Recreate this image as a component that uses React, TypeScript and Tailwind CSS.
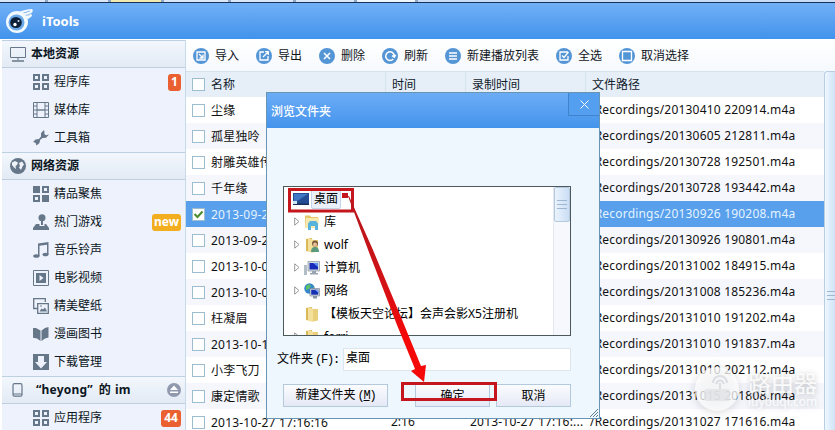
import type { ReactNode } from 'react'
import clsx from 'clsx'

const ui = "font-['Noto_Sans','Noto_Sans_CJK_SC',sans-serif]"

type IconName = 'apps' | 'film' | 'wrench' | 'featured' | 'joystick' | 'music' | 'video' | 'picture' | 'book' | 'download'

const icons: Record<IconName, ReactNode> = {
  apps: (
    <g fill="none" stroke="currentColor" strokeWidth="2">
      <rect x="1" y="1" width="5" height="5" />
      <rect x="10" y="1" width="5" height="5" />
      <rect x="1" y="10" width="5" height="5" />
      <rect x="10" y="10" width="5" height="5" />
    </g>
  ),
  film: (
    <g fill="none" stroke="currentColor">
      <path d="M.5.5h15v15H.5zM4 0v16M12 0v16" />
      <path strokeWidth="1.4" d="M4 8h8" />
      <path d="M0 4h4M0 8h4M0 12h4M12 4h4M12 8h4M12 12h4" />
    </g>
  ),
  wrench: (
    <path
      fill="currentColor"
      d="M11 0 8 3v3.500L6 9 2.500 9.500 0 12l2.500.8 1 2.700L6.500 13l.5-3L9.500 8l3.500-.2L16 4.500l-3 .7L11.300 4 11.500 2z"
    />
  ),
  featured: (
    <g fill="currentColor">
      <path d="M0 0h7v7H0zM9 9h7v7H9z" />
      <g fill="none" stroke="currentColor" strokeWidth="2">
        <rect x="10" y="1" width="5" height="5" />
        <rect x="1" y="10" width="5" height="5" />
      </g>
    </g>
  ),
  joystick: (
    <g fill="currentColor">
      <circle cx="9" cy="3.700" r="3.500" />
      <path d="M8 6h2v5H8z" />
      <path d="M3 10h3.500v2h5v-2H13l3 4v2H0v-2z" />
    </g>
  ),
  music: (
    <g fill="currentColor">
      <path d="M5 1.500 15.500 0v12.500H14V2.700l-7.500 1V14H5z" />
      <ellipse cx="3.400" cy="14" rx="3.200" ry="1.800" />
      <ellipse cx="12.500" cy="12.500" rx="3" ry="1.800" />
    </g>
  ),
  video: (
    <g>
      <path fill="none" stroke="currentColor" d="M.5.5h15v15H.5z" />
      <path fill="currentColor" fillRule="evenodd" d="M3 3h10v10H3zM6.500 5v6l4-3z" />
    </g>
  ),
  picture: (
    <g fill="none" stroke="currentColor" strokeWidth="1.300">
      <path d="M4 10.500H.7V.7h11.600V4" />
      <path d="M4.700 5.700h10.600v9.600H4.700z" />
      <path fill="currentColor" stroke="none" d="m6.500 13.500 2-3 1.500 1 2-2 2 4z" />
      <circle cx="8" cy="8" r=".8" fill="currentColor" stroke="none" />
    </g>
  ),
  book: <path fill="currentColor" d="M0 2l3 0 4.500 2.500V15L4 12.500l-4-.7zM15.500 1 12 2 8.500 4.500V15l3.500-2.500 3.500-1z" />,
  download: <path fill="currentColor" fillRule="evenodd" d="M0 0h16v16H0zM5 2v6H2l6 6.500L14 8h-3V2z" />,
}

const Icon = ({ name }: { name: IconName }) => (
  <svg className="w-4 h-4 shrink-0 text-[#667789]" viewBox="0 0 16 16">
    {icons[name]}
  </svg>
)

type Item = { label: string; icon: IconName; badge?: string }

const localItems: Item[] = [
  { label: '程序库', icon: 'apps', badge: '1' },
  { label: '媒体库', icon: 'film' },
  { label: '工具箱', icon: 'wrench' },
]

const networkItems: Item[] = [
  { label: '精品聚焦', icon: 'featured' },
  { label: '热门游戏', icon: 'joystick', badge: 'new' },
  { label: '音乐铃声', icon: 'music' },
  { label: '电影视频', icon: 'video' },
  { label: '精美壁纸', icon: 'picture' },
  { label: '漫画图书', icon: 'book' },
  { label: '下载管理', icon: 'download' },
]

const deviceItems: Item[] = [{ label: '应用程序', icon: 'apps', badge: '44' }]

const rows = [
  { name: '尘缘', path: '20130410 220914' },
  { name: '孤星独呤', path: '20130605 212811' },
  { name: '射雕英雄传', path: '20130728 192501' },
  { name: '千年缘', path: '20130728 193442' },
  { name: '2013-09-26', path: '20130926 190208', selected: true },
  { name: '2013-09-26', path: '20130926 190801' },
  { name: '2013-10-02', path: '20131002 184915' },
  { name: '2013-10-08', path: '20131008 185236' },
  { name: '枉凝眉', path: '20131010 191202' },
  { name: '2013-10-10', path: '20131010 191837' },
  { name: '小李飞刀', path: '20131010 202112' },
  { name: '康定情歌', path: '20131015 201808' },
  { name: '2013-10-27 17:16:16', path: '20131027 171616', time: '2:16', recorded: '2013-10-27 17:16:...' },
]

const tools: { label: string; draw: ReactNode }[] = [
  { label: '导入', draw: <path d="M4 7V4h8v8H4V7M6 6l4 4M10 6.500V10H6.500" /> },
  { label: '导出', draw: <path d="M8 4H4v8h8V8M7 9l5-5M9 3.700h3.300V7" /> },
  { label: '删除', draw: <path strokeWidth="1.600" d="m5 5 6 6M11 5l-6 6" /> },
  { label: '刷新', draw: <path strokeWidth="1.500" d="M11.200 11A4.300 4.300 0 1 1 12.300 8M10 7.700l2.300 1.500 1.300-2.400" /> },
  { label: '新建播放列表', draw: <path strokeWidth="1.500" d="M4 5h8M4 8h8M4 11h8" /> },
  { label: '全选', draw: <path d="M12 8v4H4V4h8M6 7.500l2 2L12.500 4" /> },
  { label: '取消选择', draw: <path d="M3.500 3.500h9v9h-9z" /> },
]

function SideItem({ label, icon, badge }: Item) {
  return (
    <div className="h-7 shrink-0 flex items-center pl-[31px] pr-[4px]">
      <Icon name={icon} />
      <span className="ml-[5px]">{label}</span>
      {badge && (
        <span
          className={clsx(
            'ml-auto h-[17px] rounded-[3px] text-white font-bold leading-[16px] text-center',
            badge === 'new' && 'w-[29px] bg-[#f3ae20]',
            badge === '1' && 'w-[13px] bg-[#ea6030]',
            badge === '44' && 'w-[20px] bg-[#ea6030]',
          )}
        >
          {badge}
        </span>
      )}
    </div>
  )
}

function SideHeader({ children }: { children: ReactNode }) {
  return (
    <div className="h-7 shrink-0 flex items-center border-y border-[#bcd0e2] bg-gradient-to-b from-[#f3f7fd] to-[#e3eaf5] pl-2 pr-[4px] font-bold">
      {children}
    </div>
  )
}

function Sidebar() {
  return (
    <div className="w-[184px] shrink-0 flex flex-col border-r border-[#c5dbe9] bg-[#eef2fd] text-[#0b1622]">
      <SideHeader>
        <svg className="w-4 h-4" viewBox="0 0 16 16" fill="none" stroke="#667789">
          <path d="M.5 1.500h15v10H.5zM8 12v2" />
          <path strokeWidth="1.500" d="M2 15h12" />
        </svg>
        <span className="ml-[5px]">本地资源</span>
      </SideHeader>
      {localItems.map((item) => (
        <SideItem key={item.label} {...item} />
      ))}
      <SideHeader>
        <svg className="w-4 h-4" viewBox="0 0 16 16">
          <circle cx="8" cy="8" r="8" fill="#667789" />
          <path fill="#eef3fa" d="M2 4.500 5 3l3 1.500L7 7 5.500 8 6 11 4 9.500 2 7zM9 5l3-1.500 2 3-1.500 2L11 12 9 9.500 10 8z" />
        </svg>
        <span className="ml-[5px]">网络资源</span>
      </SideHeader>
      {networkItems.map((item) => (
        <SideItem key={item.label} {...item} />
      ))}
      <SideHeader>
        <svg className="ml-[2px] w-[11px] h-[14px]" viewBox="0 0 11 14" fill="none" stroke="#667789">
          <rect x="1" y=".7" width="9" height="12.500" rx="1.500" strokeWidth="1.200" />
          <path d="M1 11h9" />
        </svg>
        <span className="ml-[13px] flex tracking-[0.2px]">
          “heyong”<span className="ml-[6px] mr-[4px]">的</span>im
        </span>
        <svg className="ml-auto w-[14px] h-[14px]" viewBox="0 0 14 14">
          <circle cx="7" cy="7" r="7" fill="#9099ad" />
          <path fill="#fff" d="m7 2.500 4 4.500H3zM3 8.500h8V10H3z" />
        </svg>
      </SideHeader>
      {deviceItems.map((item) => (
        <SideItem key={item.label} {...item} />
      ))}
    </div>
  )
}

function Checkbox({ checked }: { checked?: boolean }) {
  return (
    <span className="w-[13px] h-[13px] shrink-0 border border-[#9cbccf] bg-white">
      {checked && (
        <svg className="w-[11px] h-[11px]" viewBox="0 0 11 11" fill="none" stroke="#4a8b2c" strokeWidth="2">
          <path d="m1.500 5 3 3L9.500 2.500" />
        </svg>
      )}
    </span>
  )
}

function Table() {
  return (
    <div className="w-[638px] shrink-0 whitespace-nowrap">
      <div className="h-[26px] grid grid-cols-[200px_80px_120px_1fr] bg-[#e6eff7] border-t border-[#d5e2ec] text-[#10202c] leading-[25px]">
        <div className="flex items-center pl-[6px] gap-[6px] border-r border-[#d6e4ee]">
          <Checkbox />
          名称
        </div>
        <div className="pl-[6px] border-r border-[#d6e4ee]">时间</div>
        <div className="pl-[6px] border-r border-[#d6e4ee]">录制时间</div>
        <div className="pl-[6px]">文件路径</div>
      </div>
      {rows.map((row, i) => (
        <div
          key={row.path}
          className={clsx(
            'h-[26px] grid grid-cols-[199px_80px_119px_1fr] leading-[25px]',
            row.selected ? 'bg-[#589fec] text-[#e4f3ff]' : i % 2 ? 'bg-[#f5f7fd] text-[#111]' : 'bg-white text-[#111]',
          )}
        >
          <div className="flex items-center pl-[6px] gap-[6px] tracking-[0.2px]">
            <Checkbox checked={row.selected} />
            {row.name}
          </div>
          <div className="pl-[6px]">{row.time}</div>
          <div className="pl-[5px] tracking-[0.2px]">{row.recorded}</div>
          <div className="pl-[6px] tracking-[0.2px]">/Recordings/{row.path}.m4a</div>
        </div>
      ))}
    </div>
  )
}

const Twisty = ({ show }: { show?: boolean }) => (
  <svg className="w-[6px] h-[9px] shrink-0" viewBox="0 0 6 9">
    {show && <path d="M.7.8v7.400L5 4.500z" fill="#fff" stroke="#909090" strokeWidth=".9" />}
  </svg>
)

const folder = (
  <g>
    <path fill="#d9b958" d="m2 2 6-1v14l-6-1z" />
    <path fill="#f4e09a" d="m4 1.500 5 1V16l-5-1.500z" />
    <path fill="#e9cf7b" d="M9 3h5v11.500L9 15.500z" />
  </g>
)

const tree: { label: string; open?: boolean; draw: ReactNode }[] = [
  {
    label: '库',
    open: true,
    draw: (
      <g>
        <path fill="#e3c66c" d="M1 3V1.500h5L7 3h7v10H1z" />
        <path fill="#f7e9b0" d="M2 4h13l-1 10H1z" />
        <path fill="#58b4dc" d="M4 9.500 6 7h6l2 2.500V16h-3v-4H7v4H4z" />
      </g>
    ),
  },
  {
    label: 'wolf',
    open: true,
    draw: (
      <g>
        {folder}
        <circle cx="11" cy="6.500" r="3" fill="#7a5a3a" />
        <circle cx="11" cy="7.500" r="2" fill="#e8c19c" />
        <path fill="#5c9a80" d="M7 15c0-4 2-5 4-5s4 1 4 5z" />
      </g>
    ),
  },
  {
    label: '计算机',
    open: true,
    draw: (
      <g>
        <path fill="#b3bdc6" d="M0 5h3v10H0z" />
        <path fill="#d5dbe2" stroke="#8792a0" strokeWidth=".7" d="M4 1.500h11.500v9.500H4z" />
        <path fill="#172bb8" d="M5.500 3H14v6.500H5.500z" />
        <path fill="#5c8df0" d="M9 3h5v4z" />
        <path fill="#9ba5b1" d="M8 11h4v2h2v1.500H6V13h2z" />
      </g>
    ),
  },
  {
    label: '网络',
    open: true,
    draw: (
      <g>
        <circle cx="5.500" cy="5.500" r="5.200" fill="#3687c9" />
        <path fill="#5cbf68" d="M2 3 5 1l2 2-2 3-3 1zM7 6l3-2v4L8 9z" />
        <path fill="#d5dbe2" stroke="#6b7888" strokeWidth=".6" d="M6 5.500h9.500V13H6z" />
        <path fill="#1730b4" d="M7.200 6.700h7.100v5H7.200z" />
        <path fill="#79a8f4" d="M11 6.700h3.300v3z" />
        <path fill="#8693a2" d="M9 13h4v2.500H9z" />
      </g>
    ),
  },
  { label: '【模板天空论坛】会声会影X5注册机', draw: folder },
  { label: 'forri', open: true, draw: folder },
]

function Grip({ className }: { className: string }) {
  return (
    <div className={clsx('flex flex-col gap-[3px]', className)}>
      <span className="h-px bg-[#9fb7d0]" />
      <span className="h-px bg-[#9fb7d0]" />
      <span className="h-px bg-[#9fb7d0]" />
    </div>
  )
}

function DialogButton({ className, children }: { className: string; children: ReactNode }) {
  return (
    <div
      className={clsx(
        'h-[23px] shrink-0 flex items-center justify-center border border-[#b4c9db] bg-gradient-to-b from-[#fbfcfe] to-[#e5e9f6] leading-[19px]',
        className,
      )}
    >
      {children}
    </div>
  )
}

function FolderDialog() {
  return (
    <div className="absolute left-[266px] top-[92px] w-[334px] h-[327px] flex flex-col border border-[#6795b3] bg-[#eef7fe] text-black whitespace-nowrap">
      <div className="h-[35px] shrink-0 flex justify-between bg-gradient-to-b from-[#6cacf6] to-[#4394ec] text-white">
        <span className="pl-1 leading-[36px] font-medium font-['Noto_Sans_CJK_SC',sans-serif]">浏览文件夹</span>
        <span className="w-[31px] h-[23px] flex items-center justify-center border border-t-0 border-r-0 border-[#3f83cb] bg-[#549fef]">
          <svg className="w-[9px] h-[9px]" viewBox="0 0 9 9" stroke="#fff" strokeWidth="1">
            <path d="m.5.5 8 8M8.500.5l-8 8" />
          </svg>
        </span>
      </div>

      <div className="mt-[58px] ml-4 w-[288px] h-[150px] shrink-0 flex border border-[#4d5a5d] bg-white overflow-hidden">
        <div className="flex-1 min-w-0">
          <div className="h-[23px] flex items-center pl-[9px]">
            <svg className="w-4 h-3 mt-px" viewBox="0 0 16 12">
              <path fill="#234c94" d="M0 0h16v12H0z" />
              <path fill="#3f77c4" d="M1 1h14L1 10z" />
              <path fill="#1b2f57" d="M0 10.500h16V12H0z" />
              <path fill="#cfe4f8" d="M0 8h4v3H0z" />
            </svg>
            <span className="ml-[2px] h-5 leading-[18px] px-[2px] border border-[#c4d3ea] bg-[#e9f0fb] rounded-[2px]">桌面</span>
          </div>
          {tree.map((node) => (
            <div key={node.label} className="h-[23px] flex items-center pl-[10px]">
              <Twisty show={node.open} />
              <svg className="w-4 h-4 ml-1 shrink-0" viewBox="0 0 16 16">
                {node.draw}
              </svg>
              <span className="ml-[4px]">{node.label}</span>
            </div>
          ))}
        </div>
        <div className="w-[17px] border-l border-[#e3e8f2] bg-[#f6f8fe]">
          <div className="h-[35px] rounded-[2px] border border-[#b5c8dc] bg-gradient-to-r from-[#eaf3fd] to-[#cadef4] pt-3">
            <Grip className="mx-[2px]" />
          </div>
        </div>
      </div>

      <div className="mt-3 flex items-center pl-[10px]">
        <span className="w-[66px]">
          文件夹<span className="ml-[2px] font-['Liberation_Mono',monospace] text-[12px] tracking-[-1.200px]">(F):</span>
        </span>
        <div className="w-[228px] h-[23px] border border-[#dbe6ee] bg-white pl-[2px] leading-[18px]">桌面</div>
      </div>

      <div className="mt-[13px] pl-4 flex">
        <DialogButton className="w-[105px] mr-[27px]">
          <span>
            新建文件夹
            <span className="ml-[2px] font-['Liberation_Mono',monospace] text-[12px] tracking-[-1.200px]">
              (<u>M</u>)
            </span>
          </span>
        </DialogButton>
        <DialogButton className="w-[75px] mr-[6px]">确定</DialogButton>
        <DialogButton className="w-[75px]">取消</DialogButton>
      </div>
      <svg className="absolute right-px bottom-px w-2 h-2" viewBox="0 0 8 8" stroke="#5e7f98">
        <path d="M0 8 8 0M3 8l5-5M6 8l2-2" />
      </svg>
    </div>
  )
}

// Red boxes and the arrow drawn over the dialog
function Annotations() {
  return (
    <svg className="absolute inset-0 w-[835px] h-[430px]" viewBox="0 0 835 430">
      <defs>
        <linearGradient id="arrow" x1="0" y1="0" x2="0" y2="1">
          <stop offset="0" stopColor="#b3161c" />
          <stop offset=".45" stopColor="#d01216" />
          <stop offset=".75" stopColor="#f40808" />
        </linearGradient>
      </defs>
      <g fill="none" stroke="#c4161c" strokeWidth="3">
        <rect x="289.500" y="189.500" width="63" height="21.500" />
        <rect x="402.500" y="383.500" width="93" height="16" />
      </g>
      <path fill="#c4161c" d="M342 193h6v5h-6z" />
      <path fill="url(#arrow)" d="m348 196 1 0 24 54 30 72 18 44 5-1-2 17-13-11 4-2-18-44-27-70z" />
    </svg>
  )
}

function Watermark() {
  return (
    <div className="absolute left-[695px] top-[367px] flex items-center text-white/85">
      <svg className="w-11 h-11 drop-shadow-[0_1px_5px_rgba(0,0,0,0.2)]" viewBox="0 0 44 44">
        <circle cx="22" cy="22" r="22" fill="#fff" fillOpacity=".76" />
        <rect x="9" y="22" width="26" height="12" rx="3" fill="#dde0e4" fillOpacity=".75" />
        <g fill="none" stroke="#d5d9de" strokeOpacity=".8" strokeWidth="2.200">
          <path d="M25 22v-6M18 16a7 7 0 0 1 14 0M21.500 17a3.500 3.500 0 0 1 7 0" />
        </g>
      </svg>
      <div className="ml-[9px] [text-shadow:0_1px_6px_rgba(0,0,0,0.28)]">
        <div className="text-[23px] leading-[24px]">路由器</div>
        <div className="text-[12px] leading-[13px]">luyouqi.com</div>
      </div>
    </div>
  )
}

export default function App() {
  return (
    <div className={clsx('relative w-[835px] h-[430px] overflow-hidden flex flex-col bg-white text-[12px]', ui)}>
      <div className="h-[3px] shrink-0 flex gap-[3px] border-b border-[#17325c] bg-[#8fa6c6]">
        <div className="w-[45px] bg-[#d9e7f8]" />
        <div className="w-[60px] bg-[#d9e7f8]" />
        <div className="w-[50px] bg-[#f2e9ad]" />
        <div className="w-[64px] bg-[#d9e7f8]" />
        <div className="w-[62px] bg-[#d9e7f8]" />
        <div className="w-[58px] bg-[#d9e7f8]" />
        <div className="w-[58px] bg-[#eef5fd]" />
        <div className="flex-1 bg-[#c9dcf6]" />
      </div>

      <div className="h-9 shrink-0 flex items-center pl-[5px] bg-gradient-to-b from-[#71b0f6] to-[#4193ec] text-white">
        <svg className="w-7 h-6 shrink-0" viewBox="0 0 28 24">
          <path fill="#f2f9ff" d="M13 4C17 1 23 0 27 0c2 2 0 4-3 5 3 0 4 1 2 3l-3 2z" />
          <path fill="none" stroke="#6aa5e6" strokeWidth=".8" d="M17 4.500 25 2M20 6.500l5-1" />
          <circle cx="12" cy="13" r="11" fill="#f2f9ff" />
          <circle cx="11.500" cy="13.500" r="8" fill="#6aa8e8" />
          <ellipse cx="11" cy="13.500" rx="5.800" ry="5.500" fill="#0d2038" />
          <circle cx="10" cy="15.500" r="1.700" fill="#fff" />
          <circle cx="13.500" cy="12" r="1" fill="#cfe4fa" />
        </svg>
        <span className="ml-[9px] pt-[2px] font-bold text-[13px]">iTools</span>
      </div>

      <div className="flex-1 min-h-0 flex pl-[2px] pt-px">
        <Sidebar />
        <div className="flex-1 min-w-0 flex flex-col">
          <div className="h-[31px] shrink-0 flex items-center gap-[17px] pl-[7px] bg-gradient-to-b from-white to-[#f6f9fd] whitespace-nowrap text-[#10151c]">
            {tools.map((tool) => (
              <div key={tool.label} className="flex items-center gap-[6px]">
                <svg className="w-4 h-4" viewBox="0 0 16 16" fill="none">
                  <circle cx="8" cy="8" r="8" fill="#5495d6" />
                  <g stroke="#fff" strokeWidth="1.300">{tool.draw}</g>
                </svg>
                {tool.label}
              </div>
            ))}
          </div>
          <div className="flex-1 min-h-0 flex overflow-hidden">
            <Table />
            <div className="flex-1 border-l border-t border-[#b8cfe3] rounded-tl-[3px] bg-gradient-to-r from-[#eff7fe] to-[#d0e3f6]">
              <Grip className="mt-[219px] ml-[2px]" />
            </div>
          </div>
        </div>
      </div>

      <FolderDialog />
      <Annotations />
      <Watermark />
    </div>
  )
}
